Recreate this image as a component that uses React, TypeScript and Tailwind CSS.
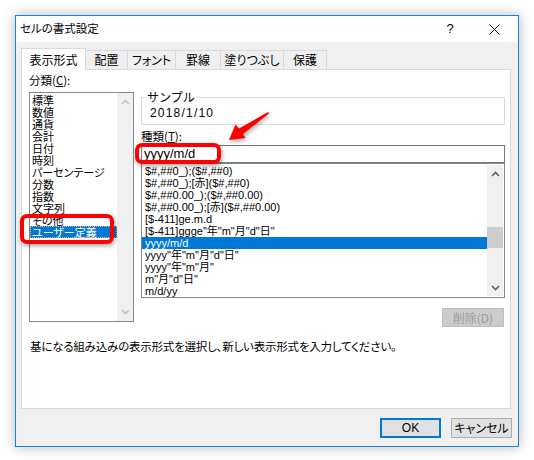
const categories = [
  "標準",
  "数値",
  "通貨",
  "会計",
  "日付",
  "時刻",
  "パーセンテージ",
  "分数",
  "指数",
  "文字列",
  "その他",
  "ユーザー定義",
];

const formats = [
  '$#,##0_);($#,##0)',
  '$#,##0_);[赤]($#,##0)',
  '$#,##0.00_);($#,##0.00)',
  '$#,##0.00_);[赤]($#,##0.00)',
  "[$-411]ge.m.d",
  '[$-411]ggge"年"m"月"d"日"',
  "yyyy/m/d",
  'yyyy"年"m"月"d"日"',
  'yyyy"年"m"月"',
  'm"月"d"日"',
  "m/d/yy",
];

const tabs = [
  { label: "配置", w: "w-[42px]" },
  { label: "フォント", w: "w-[48px]" },
  { label: "罫線", w: "w-[45px]" },
  { label: "塗りつぶし", w: "w-[63px]" },
  { label: "保護", w: "w-[43px]" },
];

function Chevron({ up, color }: { up: boolean; color: string }) {
  return (
    <svg width="9" height="6" viewBox="0 0 9 6">
      <path
        d={up ? "M1 5 L4.5 1.5 L8 5" : "M1 1 L4.5 4.5 L8 1"}
        fill="none"
        stroke={color}
        strokeWidth="1.6"
      />
    </svg>
  );
}

export default function App() {
  return (
    <div className="w-[534px] h-[460px] bg-white pl-[15px] pt-[15px] font-['Noto_Sans_CJK_JP',sans-serif] text-black">
      <div className="relative w-[504px] h-[432px] border border-[#1883d7] bg-[#f0f0f0] flex flex-col shadow-[0_0_12px_rgba(0,0,0,0.28)]">
        {/* title bar */}
        <div className="h-[26px] bg-white flex items-center pl-[4px] pr-[2px] text-[11.5px]">
          <span className="[font-feature-settings:'palt']">セルの書式設定</span>
          <span className="ml-auto w-[30px] mr-[7px] text-center text-[13px] font-['Liberation_Sans',sans-serif]">
            ?
          </span>
          <span className="w-[44px] flex justify-center">
            <svg width="11" height="11" viewBox="0 0 11 11">
              <path d="M0.5 0.5 L10.5 10.5 M10.5 0.5 L0.5 10.5" stroke="#111" strokeWidth="1" />
            </svg>
          </span>
        </div>

        <div className="flex-1 flex flex-col px-[5px] pt-[6px]">
          {/* tabs */}
          <div className="flex items-end h-[21px] text-[12px] leading-[12px]">
            <div className="relative z-10 -mb-[1px] h-[22px] w-[65px] bg-white border-t border-l border-r border-[#d9d9d9] flex items-center justify-center">
              表示形式
            </div>
            {tabs.map((t) => (
              <div
                key={t.label}
                className={`${t.w} h-[19px] border-t border-r border-[#d9d9d9] flex items-center justify-center [font-feature-settings:'palt']`}
              >
                {t.label}
              </div>
            ))}
          </div>

          {/* panel */}
          <div className="w-[490px] h-[340px] bg-white border border-[#d9d9d9] pl-[7px] pt-[4px] text-[12px] leading-[12px]">
            <div className="flex gap-[7px]">
              {/* left column */}
              <div className="w-[105px]">
                <div className="h-[12px] text-[11.5px] [font-feature-settings:'palt']">
                  分類(<span className="underline">C</span>):
                </div>
                <div className="mt-[6px] h-[230px] border border-[#828790] flex">
                  <div className="flex-1 pt-[1px] text-[11px] leading-[12px] [font-feature-settings:'palt']">
                    {categories.map((c) => (
                      <div
                        key={c}
                        className={`h-[12px] pl-[2px] whitespace-nowrap ${
                          c === "ユーザー定義"
                            ? "bg-[#0078d7] text-white outline-1 outline-dotted outline-[#f4a460] -outline-offset-1"
                            : ""
                        }`}
                      >
                        {c}
                      </div>
                    ))}
                  </div>
                  <div className="w-[16px] bg-[#f0f0f0] flex flex-col items-center justify-between py-[6px]">
                    <Chevron up color="#c2c2c2" />
                    <Chevron up={false} color="#c2c2c2" />
                  </div>
                </div>
              </div>

              {/* right column */}
              <div className="w-[364px] pt-[23px]">
                <div className="relative h-[28px] border border-[#dcdcdc] pl-[8px] pt-[9px] font-['Liberation_Sans','Noto_Sans_CJK_JP',sans-serif] tracking-[1.2px]">
                  <span className="absolute -top-[7px] left-[4px] bg-white px-[1px] tracking-normal font-['Noto_Sans_CJK_JP',sans-serif]">
                    サンプル
                  </span>
                  2018/1/10
                </div>
                <div className="mt-[5px] h-[12px] text-[11.5px] [font-feature-settings:'palt']">
                  種類(<span className="underline">T</span>):
                </div>
                <div className="mt-[3px] h-[18px] border border-[#7a7a7a] pl-[2px] flex items-center font-['Liberation_Sans',sans-serif] text-[13px]">
                  yyyy/m/d
                </div>
                <div className="h-[135px] border border-[#828790] flex pr-[1px] pt-[1px] pb-[1px] text-[11px] font-['Liberation_Sans','Noto_Sans_CJK_JP',sans-serif]">
                  <div className="flex-1">
                    {formats.map((f) => (
                      <div
                        key={f}
                        className={`h-[12px] pl-[3px] whitespace-nowrap ${
                          f === "yyyy/m/d" ? "bg-[#0078d7] text-white" : ""
                        }`}
                      >
                        {f}
                      </div>
                    ))}
                  </div>
                  <div className="w-[16px] bg-[#f0f0f0] flex flex-col">
                    <div className="h-[17px] flex items-center justify-center">
                      <Chevron up color="#606060" />
                    </div>
                    <div className="flex-1">
                      <div className="mt-[45px] h-[21px] bg-[#cdcdcd]" />
                    </div>
                    <div className="h-[17px] flex items-center justify-center">
                      <Chevron up={false} color="#606060" />
                    </div>
                  </div>
                </div>
                <div className="mt-[10px] flex justify-end pr-[1px]">
                  <div className="w-[62px] h-[19px] bg-[#cccccc] border border-[#bfbfbf] text-[#9c9c9c] flex items-center justify-center">
                    削除(D)
                  </div>
                </div>
              </div>
            </div>

            <div className="mt-[13px] pl-[1px] text-[11.5px] tracking-[-0.2px] [font-feature-settings:'palt']">
              基になる組み込みの表示形式を選択し、新しい表示形式を入力してください。
            </div>
          </div>

          {/* buttons */}
          <div className="mt-[9px] flex justify-end gap-[10px] text-[12px] pr-[1px]">
            <div className="w-[61px] h-[20px] border-2 border-[#0078d7] bg-[#e1e1e1] flex items-center justify-center font-['Liberation_Sans',sans-serif]">
              OK
            </div>
            <div className="w-[61px] h-[20px] border border-[#adadad] bg-[#e1e1e1] flex items-center justify-center [font-feature-settings:'palt']">
              キャンセル
            </div>
          </div>
        </div>

        {/* annotations */}
        <div className="absolute left-[4px] top-[198px] w-[94px] h-[30px] border-[4px] border-[#ff0000] rounded-[7px] shadow-[1px_2px_4px_rgba(0,0,0,0.35)]" />
        <div className="absolute left-[119px] top-[127px] w-[86px] h-[21px] border-[4px] border-[#ff0000] rounded-[7px] shadow-[1px_2px_4px_rgba(0,0,0,0.35)]" />
        <svg
          className="absolute left-[204px] top-[89px] drop-shadow-[1px_2px_2px_rgba(0,0,0,0.35)]"
          width="55"
          height="45"
          viewBox="0 0 55 45"
        >
          <polygon
            points="9,35 15.5,19.5 19,23.5 48,7 49,8.5 23,29 25.5,33"
            fill="#ff0000"
          />
        </svg>
      </div>
    </div>
  );
}
